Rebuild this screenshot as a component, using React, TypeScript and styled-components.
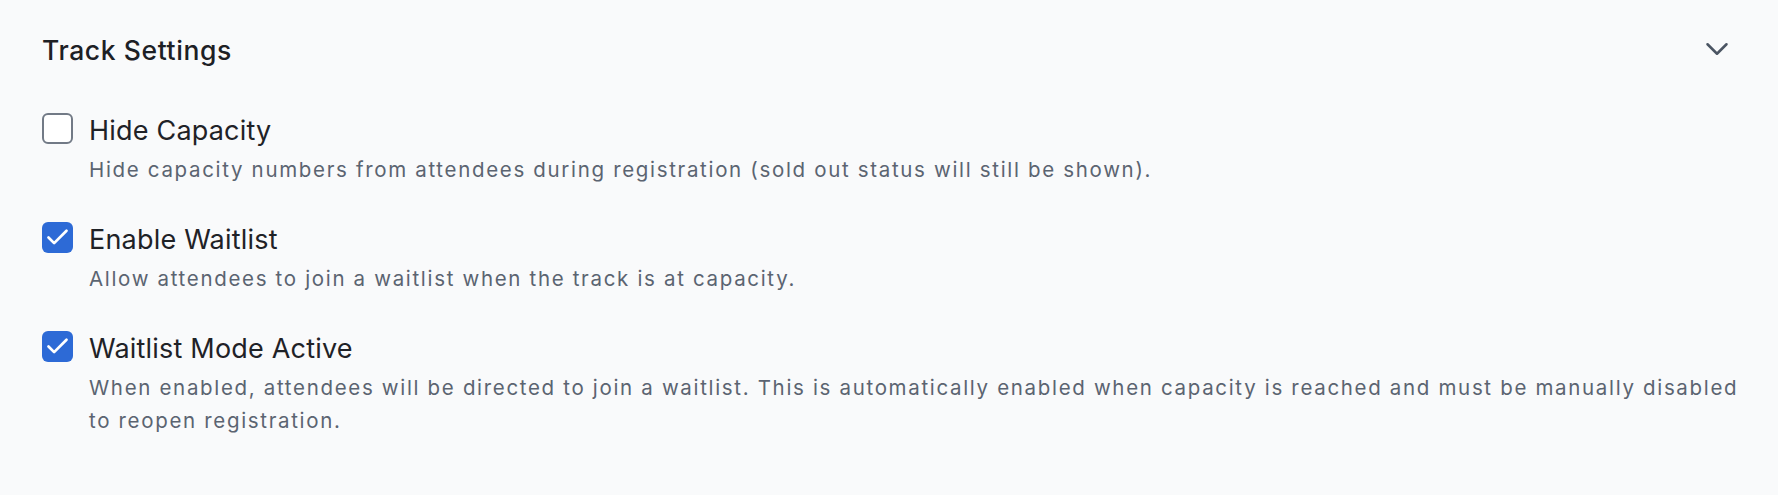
import React, { useState } from 'react'
import styled, { createGlobalStyle } from 'styled-components'
import { ChevronDown, Check } from 'lucide-react'

const GlobalStyle = createGlobalStyle`
  html, body {
    margin: 0;
    padding: 0;
    background: #f9fafb;
  }

  body {
    font-family: Inter, 'Noto Sans', sans-serif;
    -webkit-font-smoothing: antialiased;
  }
`

const Panel = styled.section`
  display: flex;
  flex-direction: column;
  padding: 34px 24px 54px 42px;
  background: #f9fafb;
`

const Header = styled.div`
  display: flex;
  align-items: center;
  justify-content: space-between;
  height: 32px;
  padding-right: 18px;
  margin-bottom: 47px;
`

const Title = styled.h2`
  margin: 0;
  font-size: 26.5px;
  line-height: 32px;
  font-weight: 500;
  color: #1d2025;
  letter-spacing: 0.6px;
`

const Toggle = styled.button`
  display: flex;
  align-items: center;
  justify-content: center;
  width: 38px;
  height: 32px;
  padding: 0;
  margin-top: -3px;
  border: none;
  background: transparent;
  color: #4b5563;
  cursor: pointer;
`

const List = styled.div`
  display: flex;
  flex-direction: column;
  gap: 36px;
`

const Option = styled.label`
  display: flex;
  align-items: flex-start;
  gap: 16px;
  cursor: pointer;
`

const Box = styled.span<{ $checked: boolean }>`
  flex: none;
  display: flex;
  align-items: center;
  justify-content: center;
  box-sizing: border-box;
  width: 31px;
  height: 31px;
  border-radius: 6px;
  border: ${(p) => (p.$checked ? 'none' : '2px solid #727a86')};
  background: ${(p) => (p.$checked ? '#2d6ad6' : '#ffffff')};
  color: #ffffff;
`

const Text = styled.div`
  display: flex;
  flex-direction: column;
  gap: 4px;
`

const Label = styled.span`
  font-size: 27px;
  line-height: 36px;
  font-weight: 400;
  color: #1f2227;
  letter-spacing: 0.2px;
`

const Hint = styled.p`
  margin: 0;
  font-size: 20.5px;
  line-height: 33px;
  color: #5b6471;
  letter-spacing: 1.67px;
`

type Setting = {
  id: string
  label: string
  hint: string
  checked: boolean
}

const initial: Setting[] = [
  {
    id: 'hide-capacity',
    label: 'Hide Capacity',
    hint: 'Hide capacity numbers from attendees during registration (sold out status will still be shown).',
    checked: false,
  },
  {
    id: 'enable-waitlist',
    label: 'Enable Waitlist',
    hint: 'Allow attendees to join a waitlist when the track is at capacity.',
    checked: true,
  },
  {
    id: 'waitlist-active',
    label: 'Waitlist Mode Active',
    hint: 'When enabled, attendees will be directed to join a waitlist. This is automatically enabled when capacity is reached and must be manually disabled to reopen registration.',
    checked: true,
  },
]

const App = () => {
  const [settings, setSettings] = useState(initial)

  const toggle = (id: string) =>
    setSettings((s) => s.map((x) => (x.id === id ? { ...x, checked: !x.checked } : x)))

  return (
    <>
      <GlobalStyle />
      <Panel>
        <Header>
          <Title>Track Settings</Title>
          <Toggle aria-label='Collapse'>
            <ChevronDown size={38} strokeWidth={1.6} />
          </Toggle>
        </Header>
        <List>
          {settings.map((s) => (
            <Option key={s.id} onClick={() => toggle(s.id)}>
              <Box $checked={s.checked} role='checkbox' aria-checked={s.checked}>
                {s.checked && <Check size={27} strokeWidth={2.4} />}
              </Box>
              <Text>
                <Label>{s.label}</Label>
                <Hint>{s.hint}</Hint>
              </Text>
            </Option>
          ))}
        </List>
      </Panel>
    </>
  )
}

export default App
